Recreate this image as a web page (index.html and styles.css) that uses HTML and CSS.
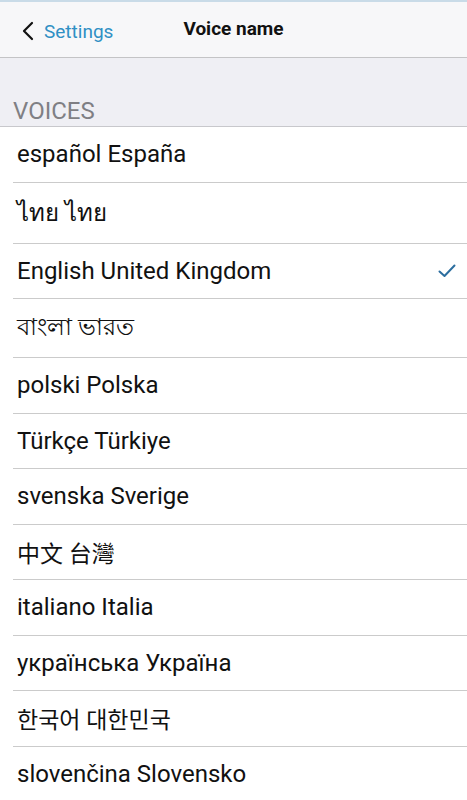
FILE: index.html
```html
<!DOCTYPE html>
<html lang="en">
<head>
<meta charset="utf-8">
<title>Voice name</title>
<link rel="stylesheet" href="styles.css">
</head>
<body>
<div class="screen">
  <header class="topbar">
    <a class="back" href="#">
      <svg class="chev" width="14" height="20" viewBox="0 0 14 20"><path d="M11 2 L3 10 L11 18" fill="none" stroke="#111" stroke-width="2.2" stroke-linecap="round" stroke-linejoin="round"/></svg>
      <span class="back-label">Settings</span>
    </a>
    <h1 class="title">Voice name</h1>
  </header>
  <div class="section-head"><span>VOICES</span></div>
  <ul class="list">
    <li class="row">español España</li>
    <li class="row row-thai" lang="th">ไทย ไทย</li>
    <li class="row selected">English United Kingdom
      <svg class="check" width="18" height="14" viewBox="0 0 18 14"><path d="M1.5 7.5 L6.5 12 L16.5 1.5" fill="none" stroke="#2c6e9f" stroke-width="2" stroke-linecap="round" stroke-linejoin="round"/></svg>
    </li>
    <li class="row row-bn" lang="bn">বাংলা ভারত</li>
    <li class="row">polski Polska</li>
    <li class="row">Türkçe Türkiye</li>
    <li class="row">svenska Sverige</li>
    <li class="row" lang="zh-TW">中文 台灣</li>
    <li class="row">italiano Italia</li>
    <li class="row">українська Україна</li>
    <li class="row" lang="ko">한국어 대한민국</li>
    <li class="row">slovenčina Slovensko</li>
  </ul>
</div>
</body>
</html>
```

FILE: styles.css
```css
html, body {
  margin: 0;
  padding: 0;
  background: #ffffff;
}
body {
  font-family: Roboto, "Noto Sans", "Noto Sans CJK TC", sans-serif;
  color: #111;
}
.screen {
  width: 467px;
  height: 800px;
  overflow: hidden;
  background: #fff;
}
.topbar {
  position: relative;
  height: 55px;
  background: #f7f7f9;
  border-top: 2px solid #c9dbe8;
  border-bottom: 1px solid #c4c4c6;
  display: flex;
  align-items: center;
  justify-content: center;
}
.back {
  position: absolute;
  left: 21px;
  top: 0;
  bottom: 0;
  display: flex;
  align-items: center;
  gap: 9px;
  text-decoration: none;
  padding-top: 3px;
}
.chev { display: block; }
.back-label {
  color: #2f8fc4;
  font-size: 19px;
}
.title {
  margin: 0;
  font-size: 19px;
  font-weight: 700;
  color: #111;
  padding-bottom: 2px;
}
.section-head {
  height: 68px;
  background: #efeff4;
  border-bottom: 1px solid #c8c8cc;
  display: flex;
  align-items: flex-end;
  padding-left: 13px;
}
.section-head span {
  font-size: 24px;
  color: #7f7f84;
  line-height: 1;
  padding-bottom: 3px;
}
.list {
  list-style: none;
  margin: 0;
  padding: 0 0 0 13px;
}
.row {
  height: 54.5px;
  border-bottom: 1px solid #cbcbcb;
  display: flex;
  align-items: center;
  justify-content: space-between;
  padding-left: 4px;
  padding-right: 11px;
  font-size: 24px;
  color: #111;
}
.row-thai { height: 60px; }
.row-bn { height: 58px; }
.row[lang="zh-TW"] { font-family: Roboto, "Noto Sans CJK TC", sans-serif; font-size: 23px; }
.row[lang="ko"] { font-family: Roboto, "Noto Sans CJK KR", sans-serif; font-size: 23px; }
.check { display: block; }
```
